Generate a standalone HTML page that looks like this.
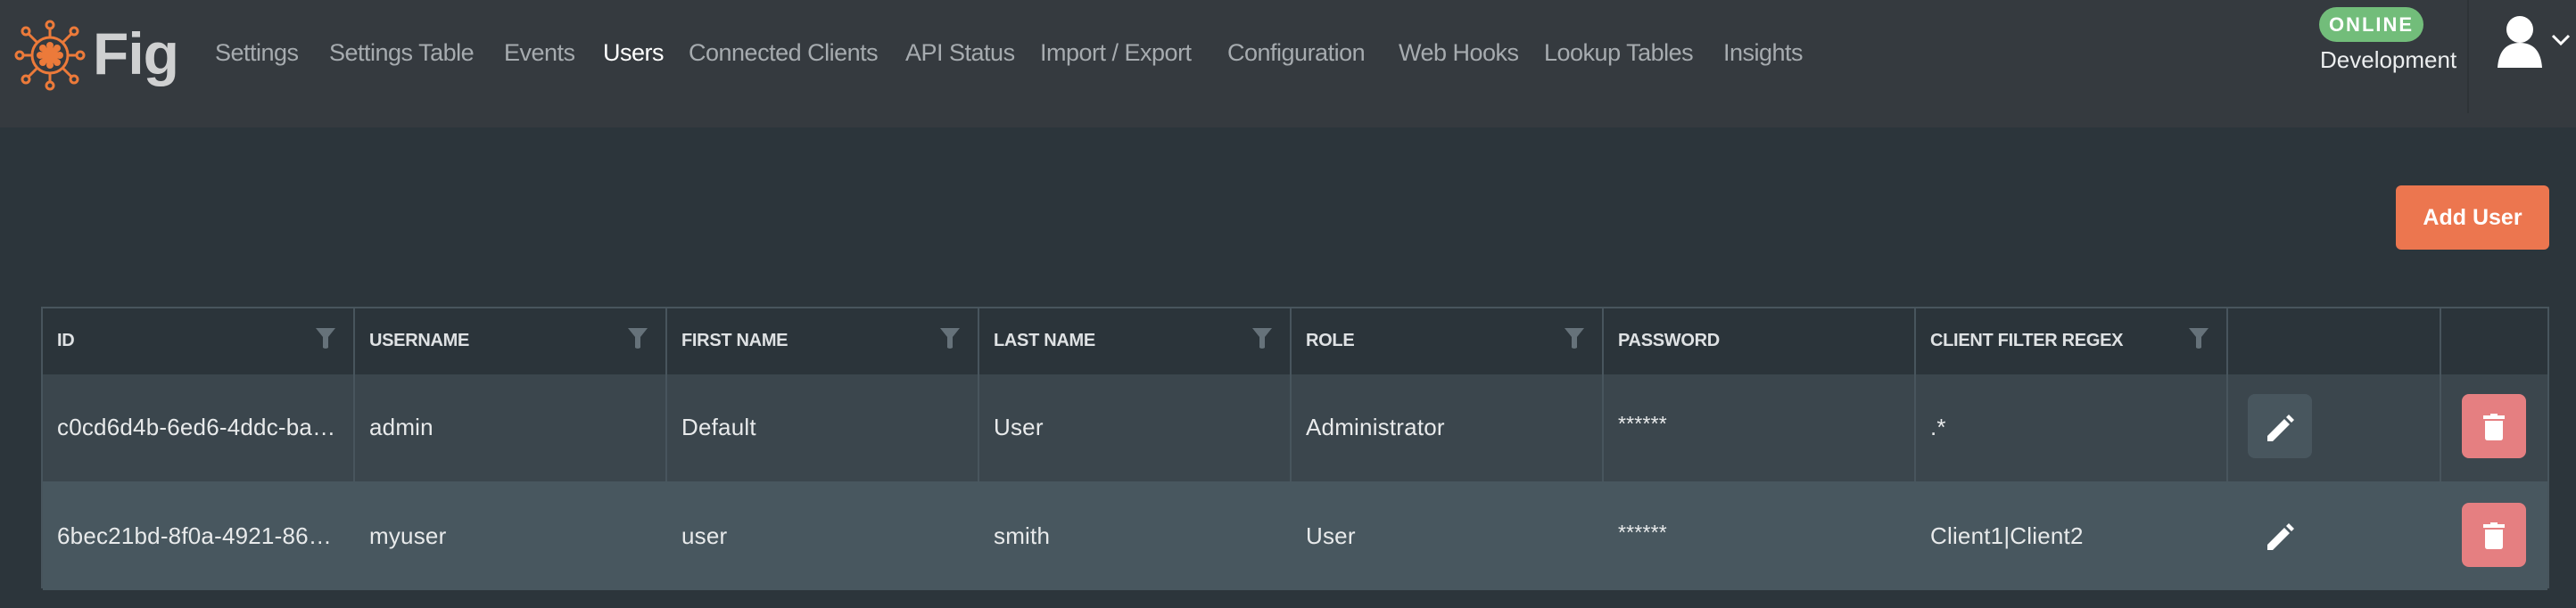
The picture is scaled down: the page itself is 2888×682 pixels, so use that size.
<!DOCTYPE html>
<html><head><meta charset="utf-8">
<style>
*{margin:0;padding:0;box-sizing:border-box}
body{width:2888px;height:682px;background:#2c353b;font-family:"Liberation Sans",sans-serif;position:relative;overflow:hidden}
.hdr{position:absolute;left:0;top:0;width:2888px;height:143px;background:#353a3f}
.nav{position:absolute;top:44px;font-size:27px;color:#a6abaf;white-space:nowrap;letter-spacing:-0.5px}
.t{position:absolute;white-space:nowrap}
.tbl{position:absolute;left:46px;top:344px;width:2812px;height:316px;border:2px solid #48555d;border-bottom:none}
.hrow{position:absolute;left:0;top:0;width:100%;height:74px;background:#2b343a}
.r1{position:absolute;left:0;top:74px;width:100%;height:120px;background:#3b464d}
.r2{position:absolute;left:0;top:194px;width:100%;height:122px;background:#48575f}
.vl{position:absolute;top:0;width:2px;height:194px;background:#48555d}
.th{position:absolute;top:25px;font-size:20px;font-weight:bold;color:#dfe2e4;letter-spacing:-0.3px}
.td{position:absolute;font-size:26px;color:#e8eaeb;letter-spacing:0.2px}
.flt{position:absolute;top:22px}
.btn{position:absolute;width:72px;height:72px;border-radius:8px}
</style></head><body>
<div class="hdr"></div>
<svg class="t" style="left:12px;top:22px" width="88" height="80" viewBox="0 0 88 80" fill="none" stroke="#ec7a3a" stroke-width="3">
<circle cx="44" cy="40" r="20"/>
<circle cx="44" cy="40" r="8" fill="#ec7a3a"/>
<g fill="#ec7a3a" stroke="none"><circle cx="44" cy="29" r="4"/><circle cx="44" cy="51" r="4"/><circle cx="33" cy="40" r="4"/><circle cx="55" cy="40" r="4"/><circle cx="36" cy="32" r="4"/><circle cx="52" cy="32" r="4"/><circle cx="36" cy="48" r="4"/><circle cx="52" cy="48" r="4"/></g>
<line x1="44" y1="20" x2="44" y2="10"/><circle cx="44" cy="6" r="4"/>
<line x1="44" y1="60" x2="44" y2="70"/><circle cx="44" cy="74" r="4"/>
<line x1="24" y1="40" x2="14" y2="40"/><circle cx="10" cy="40" r="4"/>
<line x1="64" y1="40" x2="74" y2="40"/><circle cx="78" cy="40" r="4"/>
<line x1="30" y1="26" x2="20" y2="16"/><circle cx="17" cy="13" r="4"/>
<line x1="58" y1="26" x2="68" y2="16"/><circle cx="71" cy="13" r="4"/>
<line x1="30" y1="54" x2="20" y2="64"/><circle cx="17" cy="67" r="4"/>
<line x1="58" y1="54" x2="68" y2="64"/><circle cx="71" cy="67" r="4"/>
</svg>
<div class="t" style="left:104px;top:22px;font-size:66px;font-weight:bold;color:#cfd0d1;letter-spacing:-1px">Fig</div>
<div class="nav" style="left:241px">Settings</div>
<div class="nav" style="left:369px">Settings Table</div>
<div class="nav" style="left:565px">Events</div>
<div class="nav" style="left:676px;color:#fff">Users</div>
<div class="nav" style="left:772px">Connected Clients</div>
<div class="nav" style="left:1015px">API Status</div>
<div class="nav" style="left:1166px">Import / Export</div>
<div class="nav" style="left:1376px">Configuration</div>
<div class="nav" style="left:1568px">Web Hooks</div>
<div class="nav" style="left:1731px">Lookup Tables</div>
<div class="nav" style="left:1932px">Insights</div>
<div class="t" style="left:2600px;top:8px;width:117px;height:39px;border-radius:20px;background:#72bd7a;color:#fff;font-weight:bold;font-size:22px;letter-spacing:2px;text-align:center;line-height:39px">ONLINE</div>
<div class="t" style="left:2601px;top:52px;font-size:26px;color:#eceeef">Development</div>
<div class="t" style="left:2766px;top:0;width:2px;height:127px;background:#2e3337"></div>
<svg class="t" style="left:2800px;top:18px" width="52" height="58" viewBox="0 0 52 58"><circle cx="25" cy="15" r="15" fill="#fff"/><path d="M0 58 Q2 30 25 30 Q48 30 50 58 Z" fill="#fff"/></svg>
<svg class="t" style="left:2860px;top:38px" width="22" height="14" viewBox="0 0 22 14"><path d="M2 2 L11 11 L20 2" stroke="#fff" stroke-width="3" fill="none"/></svg>
<div class="t" style="left:2686px;top:208px;width:172px;height:72px;border-radius:6px;background:#ec764f;color:#fff;font-weight:bold;font-size:25px;text-align:center;line-height:72px">Add User</div>

<div class="tbl">
<div class="hrow"></div><div class="r1"></div><div class="r2"></div>
<div class="vl" style="left:348px"></div><div class="vl" style="left:698px"></div><div class="vl" style="left:1048px"></div><div class="vl" style="left:1398px"></div><div class="vl" style="left:1748px"></div><div class="vl" style="left:2098px"></div><div class="vl" style="left:2448px"></div><div class="vl" style="left:2687px"></div>
<div class="th" style="left:16px">ID</div>
<div class="th" style="left:366px">USERNAME</div>
<div class="th" style="left:716px">FIRST NAME</div>
<div class="th" style="left:1066px">LAST NAME</div>
<div class="th" style="left:1416px">ROLE</div>
<div class="th" style="left:1766px">PASSWORD</div>
<div class="th" style="left:2116px">CLIENT FILTER REGEX</div>
<svg class="flt" style="left:306px" width="22" height="24" viewBox="0 0 22 24"><path d="M0 0H22L14 10V22Q11 24 8 22V10Z" fill="#66727a"/></svg>
<svg class="flt" style="left:656px" width="22" height="24" viewBox="0 0 22 24"><path d="M0 0H22L14 10V22Q11 24 8 22V10Z" fill="#66727a"/></svg>
<svg class="flt" style="left:1006px" width="22" height="24" viewBox="0 0 22 24"><path d="M0 0H22L14 10V22Q11 24 8 22V10Z" fill="#66727a"/></svg>
<svg class="flt" style="left:1356px" width="22" height="24" viewBox="0 0 22 24"><path d="M0 0H22L14 10V22Q11 24 8 22V10Z" fill="#66727a"/></svg>
<svg class="flt" style="left:1706px" width="22" height="24" viewBox="0 0 22 24"><path d="M0 0H22L14 10V22Q11 24 8 22V10Z" fill="#66727a"/></svg>
<svg class="flt" style="left:2406px" width="22" height="24" viewBox="0 0 22 24"><path d="M0 0H22L14 10V22Q11 24 8 22V10Z" fill="#66727a"/></svg>

<div class="td" style="left:16px;top:118px">c0cd6d4b-6ed6-4ddc-ba…</div>
<div class="td" style="left:366px;top:118px">admin</div>
<div class="td" style="left:716px;top:118px">Default</div>
<div class="td" style="left:1066px;top:118px">User</div>
<div class="td" style="left:1416px;top:118px">Administrator</div>
<div class="td" style="left:1766px;top:116px;font-size:23px">******</div>
<div class="td" style="left:2116px;top:118px">.*</div>
<div class="td" style="left:16px;top:240px">6bec21bd-8f0a-4921-86…</div>
<div class="td" style="left:366px;top:240px">myuser</div>
<div class="td" style="left:716px;top:240px">user</div>
<div class="td" style="left:1066px;top:240px">smith</div>
<div class="td" style="left:1416px;top:240px">User</div>
<div class="td" style="left:1766px;top:238px;font-size:23px">******</div>
<div class="td" style="left:2116px;top:240px">Client1|Client2</div>

<div class="btn" style="left:2472px;top:96px;background:#48565e"></div>
<svg class="t" style="left:2494px;top:119px" width="30" height="30" viewBox="0 0 30 30"><path d="M0 24 L19 5 L25 11 L6 30 H0Z M21 3 L24 0 L30 6 L27 9Z" fill="#fff"/></svg>
<svg class="t" style="left:2494px;top:241px" width="30" height="30" viewBox="0 0 30 30"><path d="M0 24 L19 5 L25 11 L6 30 H0Z M21 3 L24 0 L30 6 L27 9Z" fill="#fff"/></svg>
<div class="btn" style="left:2712px;top:96px;background:#e57f81"></div>
<div class="btn" style="left:2712px;top:218px;background:#e57f81"></div>
<svg class="t" style="left:2736px;top:118px" width="24" height="30" viewBox="0 0 24 30"><rect x="0" y="2" width="24" height="4" fill="#fff"/><rect x="8" y="0" width="8" height="3" fill="#fff"/><path d="M2 8H22V27Q22 30 19 30H5Q2 30 2 27Z" fill="#fff"/></svg>
<svg class="t" style="left:2736px;top:240px" width="24" height="30" viewBox="0 0 24 30"><rect x="0" y="2" width="24" height="4" fill="#fff"/><rect x="8" y="0" width="8" height="3" fill="#fff"/><path d="M2 8H22V27Q22 30 19 30H5Q2 30 2 27Z" fill="#fff"/></svg>
</div>
</body></html>
